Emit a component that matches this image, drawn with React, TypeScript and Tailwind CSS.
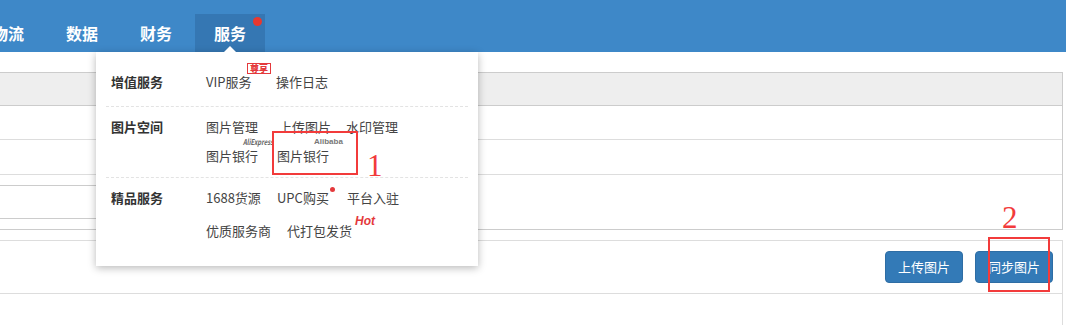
import React from 'react'

function classNames(...classes: any[]) {
  return classes.filter(Boolean).join(' ')
}

const TABS = ['物流', '数据', '财务', '服务']

const Item = ({ w, children }: { w?: string; children: React.ReactNode }) => (
  <div className={classNames('relative flex h-[20px] items-center text-[13px] leading-[20px] text-[#444]', w)}>
    {children}
  </div>
)

const Label = ({ children }: { children: React.ReactNode }) => (
  <div className="flex h-[20px] w-[100px] shrink-0 items-center pl-[5px] text-[13px] font-bold leading-[20px] text-[#333]">
    {children}
  </div>
)

const Dropdown = () => (
  <div className="absolute left-[96px] top-[52px] h-[214px] w-[382px] bg-white px-[10px] shadow-[0_2px_8px_rgba(0,0,0,0.28)]">
    <div className="absolute left-[127px] top-[-6px] h-0 w-0 border-x-[7px] border-b-[7px] border-x-transparent border-b-white" />
    {/* 增值服务 */}
    <div className="flex border-b border-dashed border-[#e3e3e3] pt-[20px] pb-[14px]">
      <Label>增值服务</Label>
      <div className="flex">
        <Item w="w-[70px]">
          VIP服务
          <span className="absolute left-[41px] top-[-9px] border border-[#e4393c] bg-white px-[2px] text-[9px] font-black leading-[9px] text-[#e4393c]">
            尊享
          </span>
        </Item>
        <Item>操作日志</Item>
      </div>
    </div>
    {/* 图片空间 */}
    <div className="flex border-b border-dashed border-[#e3e3e3] pt-[10px] pb-[11px]">
      <Label>图片空间</Label>
      <div className="flex flex-col gap-[9px]">
        <div className="flex">
          <Item w="w-[73px]">图片管理</Item>
          <Item w="w-[67px]">上传图片</Item>
          <Item>水印管理</Item>
        </div>
        <div className="flex">
          <Item w="w-[71px]">
            图片银行
            <span className="absolute left-[37px] top-[-8px] origin-left scale-x-75 whitespace-nowrap text-[8px] font-bold italic leading-[8px] text-[#666]">
              AliExpress
            </span>
          </Item>
          <Item>
            图片银行
            <span className="absolute left-[37px] top-[-8px] whitespace-nowrap font-['Liberation_Sans',sans-serif] text-[8px] font-bold leading-[8px] text-[#777]">
              Alibaba
            </span>
          </Item>
        </div>
      </div>
    </div>
    {/* 精品服务 */}
    <div className="flex pt-[10px] pb-[25px]">
      <Label>精品服务</Label>
      <div className="flex flex-col gap-[13px]">
        <div className="flex">
          <Item w="w-[71px]">1688货源</Item>
          <Item w="w-[70px]">
            UPC购买
            <span className="absolute left-[53px] top-[-1px] h-[5px] w-[5px] rounded-full bg-[#e4393c]" />
          </Item>
          <Item>平台入驻</Item>
        </div>
        <div className="flex">
          <Item w="w-[81px]">优质服务商</Item>
          <Item>
            代打包发货
            <span className="absolute left-[68px] top-[-6px] font-['Liberation_Sans',sans-serif] text-[12px] font-bold italic leading-[12px] text-[#e4393c]">
              Hot
            </span>
          </Item>
        </div>
      </div>
    </div>
  </div>
)

export default function App() {
  return (
    <div className="relative h-[325px] w-[1066px] overflow-hidden bg-white font-['Noto_Sans_CJK_SC',sans-serif]">
      <header className="flex h-[52px] items-end bg-[#3e88c8]">
        <nav className="ml-[-27px] flex h-[38px] gap-[4px]">
          {TABS.map(t => (
            <div
              key={t}
              className={classNames(
                'relative flex w-[70px] items-center justify-center text-[16px] font-bold text-white',
                t === '服务' && 'bg-[#3577b3]',
              )}
            >
              {t}
              {t === '服务' && (
                <span className="absolute left-[58px] top-[3px] h-[9px] w-[9px] rounded-full bg-[#e8382f]" />
              )}
            </div>
          ))}
        </nav>
      </header>

      <div className="pt-[20px]">
        <div className="w-[1063px] border-r border-t border-[#ccc]">
          <div className="h-[33px] border-b border-[#ccc] bg-[#eee]" />
          <div className="h-[34px] border-b border-[#ddd]" />
          <div className="h-[35px] border-b border-[#ddd]" />
          <div className="border-b border-[#ccc] py-[10px]">
            <div className="ml-[-2px] h-[34px] w-[300px] border border-[#ccc]" />
          </div>
        </div>

        <div className="mt-[10px] w-[1063px] border-r border-t border-[#ddd]">
          <div className="flex justify-end gap-[12px] border-b border-[#ddd] py-[10px] pr-[9px]">
            <button className="h-[32px] w-[78px] rounded-[4px] border border-[#2e6da4] bg-[#337ab7] text-[13px] text-white">
              上传图片
            </button>
            <button className="h-[32px] w-[78px] rounded-[4px] border border-[#2e6da4] bg-[#337ab7] text-[13px] text-white">
              同步图片
            </button>
          </div>
          <div className="h-[40px]" />
        </div>
      </div>

      <Dropdown />

      {/* annotations */}
      <div className="absolute left-[272px] top-[131px] h-[44px] w-[86px] border-2 border-[#f23b3b]" />
      <div className="absolute left-[367px] top-[151px] font-['Liberation_Serif',serif] text-[31px] leading-[30px] text-[#f23b3b]">1</div>
      <div className="absolute left-[988px] top-[237px] h-[55px] w-[62px] border-2 border-[#f23b3b]" />
      <div className="absolute left-[1002px] top-[203px] font-['Liberation_Serif',serif] text-[31px] leading-[30px] text-[#f23b3b]">2</div>
    </div>
  )
}
